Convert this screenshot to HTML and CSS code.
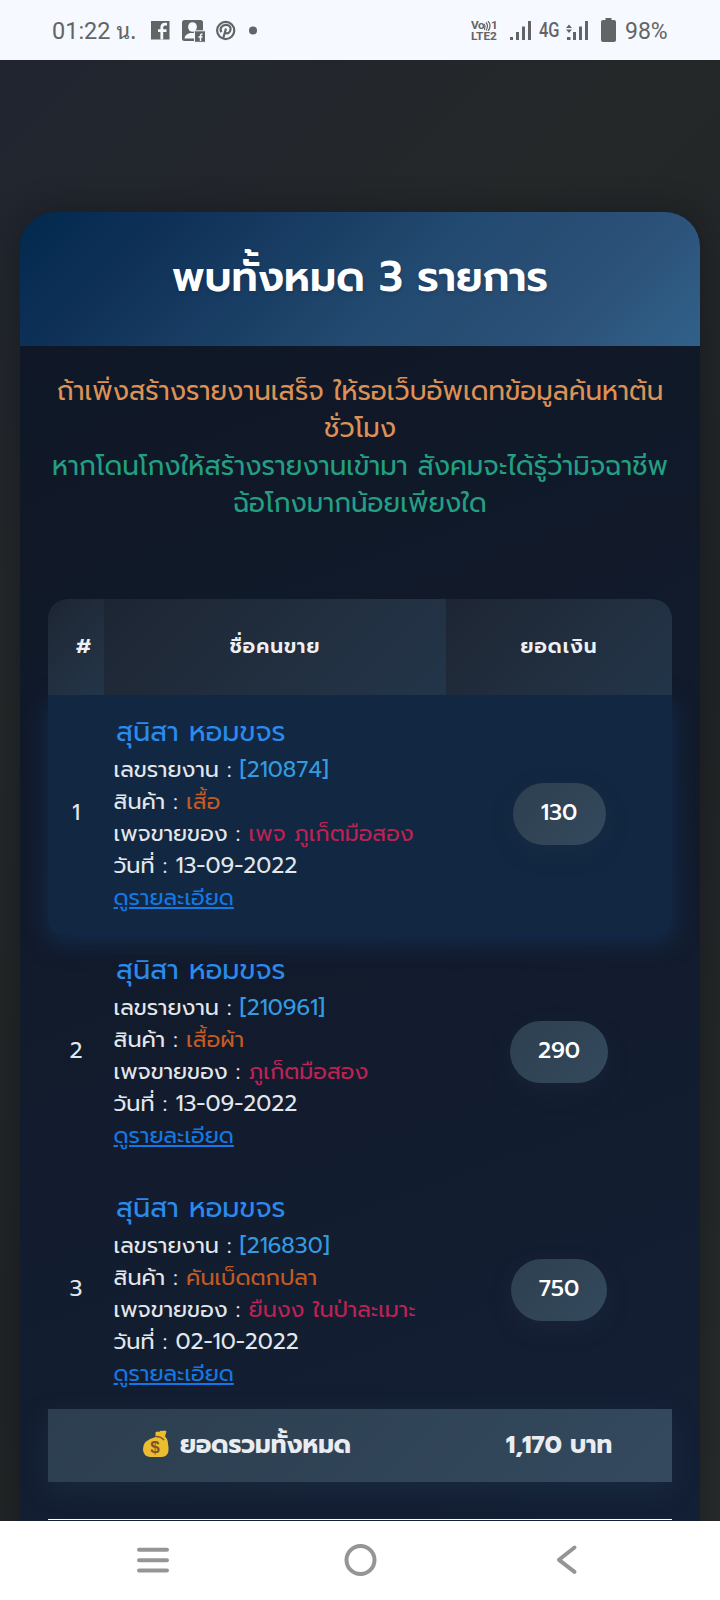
FILE: index.html
```html
<!DOCTYPE html>
<html lang="th">
<head>
<meta charset="utf-8">
<title>พบทั้งหมด 3 รายการ</title>
<link rel="stylesheet" href="styles.css">
</head>
<body>
<div class="screen">
  <header class="status">
    <span class="clock"><span>01:22</span><span class="clock-unit">น.</span></span>
    <svg class="status-left" width="110" height="26" viewBox="0 0 110 26">
      <path fill="#636466" d="M1 3h18.500v18.500H1z"/>
      <path d="M11.800 21.500V9.500q0-3.300 3.300-3.300h1.900M8 12.600h8.500" fill="none" stroke="#f6f9ff" stroke-width="2.800"/>
      <rect x="32" y="2" width="21" height="21" rx="2.500" fill="#636466"/>
      <ellipse cx="42.500" cy="9" rx="4.400" ry="4.800" fill="#f6f9ff"/>
      <path fill="#f6f9ff" d="M34.500 20.500q.3-4.500 6-5.500h4.500v5.500z"/>
      <rect x="44.500" y="12.800" width="11" height="11.500" rx="1" fill="#636466" stroke="#f6f9ff"/>
      <path d="M50.500 23v-5q0-2 2-2M48.500 19h4" fill="none" stroke="#f6f9ff" stroke-width="1.400"/>
      <circle cx="75.700" cy="12.500" r="8.600" fill="none" stroke="#636466" stroke-width="2.200"/>
      <path d="M71.300 14.300c-2-3.800.6-7.400 4.700-7.400 3.500 0 5 2.300 4.500 5-.5 3-3.300 4.500-5.200 2.600M76 10.500l-3 10.500" fill="none" stroke="#636466" stroke-width="2.200"/>
      <circle cx="103" cy="12.500" r="4" fill="#636466"/>
    </svg>
    <span class="spacer"></span>
    <span class="volte"><span class="volte-top">Vo<svg width="7" height="10" viewBox="0 0 7 10"><path d="M0 3q2 2.500 0 6M2 1.500q3 3.500 0 8M4 0q4 5 0 10" fill="none" stroke="#636466" stroke-width="1.200"/></svg>1</span><span>LTE2</span></span>
    <svg class="bars" width="22" height="20" viewBox="0 0 22 20"><path fill="#636466" d="M0 16h3v3H0zM6 11h3v8H6zM12 5.500h3V19h-3zM18 0h3v19h-3z"/></svg>
    <span class="net"><span class="net-text">4G</span></span>
    <svg class="bars2" width="22" height="20" viewBox="0 0 22 20"><path fill="#636466" d="M0 16h3.500v3H0zM6 11h3v8H6zM12 5.500h3V19h-3zM18 0h3v19h-3zM-1 7l3-3.500L5 7zM-1 8.500h6L2 12z"/></svg>
    <svg class="battery" width="16" height="24" viewBox="0 0 16 24"><path fill="#636466" d="M4.500 0h6v2H13q2 0 2 2v18q0 2-2 2H2q-2 0-2-2V4q0-2 2-2h2.500z"/></svg>
    <span class="percent">98%</span>
  </header>

  <main class="page">
    <section class="card">
      <h1 class="title">พบทั้งหมด 3 รายการ</h1>
      <div class="body">
        <div class="notes">
          <div class="note warn">ถ้าเพิ่งสร้างรายงานเสร็จ ให้รอเว็บอัพเดทข้อมูลค้นหาต้น</div>
          <div class="note warn">ชั่วโมง</div>
          <div class="note good">หากโดนโกงให้สร้างรายงานเข้ามา สังคมจะได้รู้ว่ามิจฉาชีพ</div>
          <div class="note good">ฉ้อโกงมากน้อยเพียงใด</div>
        </div>
        <div class="table">
          <div class="row head"><div class="th th-no">#</div><div class="th">ชื่อคนขาย</div><div class="th">ยอดเงิน</div></div>
          <div class="row item active">
            <div class="no">1</div>
            <div class="info">
              <div class="name">สุนิสา หอมขจร</div>
              <div class="line">เลขรายงาน : <span class="id">[210874]</span></div>
              <div class="line">สินค้า : <span class="goods">เสื้อ</span></div>
              <div class="line">เพจขายของ : <span class="shop">เพจ ภูเก็ตมือสอง</span></div>
              <div class="line">วันที่ : <span class="date">13-09-2022</span></div>
              <div class="line"><a class="more">ดูรายละเอียด</a></div>
            </div>
            <div class="amount"><span class="pill p1">130</span></div>
          </div>
          <div class="row item">
            <div class="no">2</div>
            <div class="info">
              <div class="name">สุนิสา หอมขจร</div>
              <div class="line">เลขรายงาน : <span class="id">[210961]</span></div>
              <div class="line">สินค้า : <span class="goods">เสื้อผ้า</span></div>
              <div class="line">เพจขายของ : <span class="shop">ภูเก็ตมือสอง</span></div>
              <div class="line">วันที่ : <span class="date">13-09-2022</span></div>
              <div class="line"><a class="more">ดูรายละเอียด</a></div>
            </div>
            <div class="amount"><span class="pill p2">290</span></div>
          </div>
          <div class="row item">
            <div class="no">3</div>
            <div class="info">
              <div class="name">สุนิสา หอมขจร</div>
              <div class="line">เลขรายงาน : <span class="id">[216830]</span></div>
              <div class="line">สินค้า : <span class="goods">คันเบ็ดตกปลา</span></div>
              <div class="line">เพจขายของ : <span class="shop">ยืนงง ในป่าละเมาะ</span></div>
              <div class="line">วันที่ : <span class="date">02-10-2022</span></div>
              <div class="line"><a class="more">ดูรายละเอียด</a></div>
            </div>
            <div class="amount"><span class="pill p3">750</span></div>
          </div>
          <div class="total">
            <div class="total-label">
              <svg width="26" height="28" viewBox="0 0 26 28">
                <path fill="#ecbd30" d="M12.500 7L12.500 2.500Q14 1 16 2q1.500-2 3.500-1 2-1 4 .5L22 6.500q3 2.500 3 7.500 1 4 .3 8-1.300 5-7.300 5H7q-7-1-7-8Q0 10 12.500 7z"/>
                <path d="M12.500 6.500q5-.3 8.500 3.500" fill="none" stroke="#7c5522" stroke-width="1.600"/>
                <text x="12" y="23" class="dollar">$</text>
              </svg>
              <span>ยอดรวมทั้งหมด</span>
            </div>
            <div class="total-sum">1,170 บาท</div>
          </div>
        </div>
        <div class="rule"></div>
      </div>
    </section>
  </main>

  <nav class="nav">
    <svg width="34" height="34" viewBox="0 0 34 34"><path d="M3 6.800h28M3 17.300h28M3 27.500h28" stroke="#959595" stroke-width="4" stroke-linecap="round"/></svg>
    <svg width="34" height="34" viewBox="0 0 34 34"><circle cx="17.500" cy="17" r="14" fill="none" stroke="#959595" stroke-width="4"/></svg>
    <svg width="34" height="34" viewBox="0 0 34 34"><path d="M24.500 4.500L9 16.800l15.500 12" fill="none" stroke="#959595" stroke-width="4" stroke-linecap="round" stroke-linejoin="round"/></svg>
  </nav>
</div>
</body>
</html>
```
FILE: styles.css
```css
* { box-sizing: border-box; }
body { margin: 0; font-family: Prompt, "Noto Sans Thai", "Noto Sans", sans-serif; }
.screen { width: 720px; height: 1600px; display: flex; flex-direction: column; overflow: hidden; }
svg { display: block; flex: none; }

.status { height: 60px; flex: none; display: flex; align-items: center; padding: 2px 52px 0; background: #f6f9ff; color: #636466; font-family: Roboto, "Noto Sans Thai", sans-serif; }
.clock { font-size: 23.500px; width: 98px; display: flex; align-items: baseline; gap: 6px; margin-top: -2px; white-space: nowrap; }
.clock-unit { font-family: "Noto Sans Thai Looped", "Noto Serif Thai", Sarabun, Loma, sans-serif; font-size: 22px; line-height: 28px; }
.status-left { overflow: visible; }
.spacer { flex: 1; }
.volte { font: 700 11.800px/11px Roboto, sans-serif; width: 25px; margin-top: -1px; display: flex; flex-direction: column; white-space: nowrap; }
.volte-top { display: flex; align-items: flex-end; letter-spacing: -.5px; }
.bars { margin: -1px 0 0 14px; }
.bars2 { margin: -1px 0 0 8px; overflow: visible; }
.net { margin-left: 7px; width: 20px; white-space: nowrap; }
.net-text { display: inline-block; font-size: 20px; font-weight: 500; transform: scaleX(.82); transform-origin: 0 50%; margin-top: -2px; }
.battery { margin: -2px 0 0 12px; }
.percent { font-size: 23px; margin-left: 8px; width: 43px; white-space: nowrap; }

.page { height: 1461px; flex: none; overflow: hidden; padding: 152px 20px 0; background: linear-gradient(135deg, #212530, #242829 30%, #212426 60%, #282c2b); }
.card { height: 1400px; border-radius: 35px 35px 0 0; overflow: hidden; background: linear-gradient(160deg, #0f1725, #121b2c 50%, #142036); box-shadow: 0 0 32px rgba(10, 12, 18, .4); }
.title { height: 134px; margin: 0; display: flex; align-items: center; justify-content: center; padding-bottom: 5px; background: linear-gradient(135deg, #02294d, #0f3158 20%, #22496f 55%, #2c5178 80%, #30618a); color: #fff; font-size: 41.200px; font-weight: 600; text-shadow: 0 2px 4px rgba(0, 0, 0, .15); white-space: nowrap; }
.body { padding: 27px 28px 0; }
.notes { height: 226px; display: flex; flex-direction: column; align-items: center; }
.note { height: 37.300px; line-height: 37.300px; font-size: 26.250px; white-space: nowrap; }
.warn { color: #dd9156; }
.good { color: #239f83; }

.row { display: grid; grid-template-columns: 56px 342px 226px; }
.head { height: 96px; border-radius: 20px 20px 0 0; overflow: hidden; }
.th { display: flex; align-items: center; justify-content: center; padding-bottom: 2px; background: linear-gradient(135deg, #1d2533, #212e3e 50%, #233549); color: #eef0f4; font-size: 20px; font-weight: 600; letter-spacing: 1px; }
.th-no { padding-left: 16px; }
.item { height: 238px; color: #e3e7ec; align-items: center; }
.active { background: #122741; box-shadow: 0 8px 25px rgba(18, 56, 100, .65); border-radius: 0 0 12px 12px; }
.no { text-align: center; font-size: 22.400px; padding-bottom: 4px; }
.info { height: 100%; padding: 18px 0 0 9.500px; }
.name { height: 41px; line-height: 38px; padding-left: 2.500px; font-size: 27.400px; color: #2b8aec; white-space: nowrap; }
.line { height: 32px; line-height: 32px; font-size: 22.350px; white-space: nowrap; }
.id { color: #349be0; }
.goods { color: #c25a22; }
.shop { color: #bd2254; }
.more { color: #1478e4; text-decoration: underline; text-underline-offset: 2px; text-decoration-thickness: 2px; }
.amount { display: flex; justify-content: center; }
.pill { height: 62px; border-radius: 31px; display: flex; align-items: center; justify-content: center; padding-bottom: 3px; background: linear-gradient(135deg, #2d4051, #34495c); color: #fff; font-size: 22.400px; font-weight: 500; box-shadow: 0 8px 25px rgba(44, 62, 80, .2); }
.p1 { width: 93px; }
.p2 { width: 98px; }
.p3 { width: 96px; }
.total { height: 73px; display: grid; grid-template-columns: 398px 226px; background: linear-gradient(135deg, #2c3e4f, #34495e); color: #e9ecf0; font-size: 24.600px; font-weight: 700; box-shadow: 0 8px 25px rgba(36, 60, 80, .4); }
.total-label, .total-sum { display: flex; align-items: center; justify-content: center; gap: 11px; padding-bottom: 3px; white-space: nowrap; }
.dollar { font: 700 17px "Liberation Sans", sans-serif; fill: #7c5522; text-anchor: middle; }
.rule { height: 1px; margin-top: 37px; background: #fff; }

.nav { height: 79px; flex: none; display: flex; justify-content: space-between; align-items: center; padding: 0 136px 1px; background: #fff; }
```
